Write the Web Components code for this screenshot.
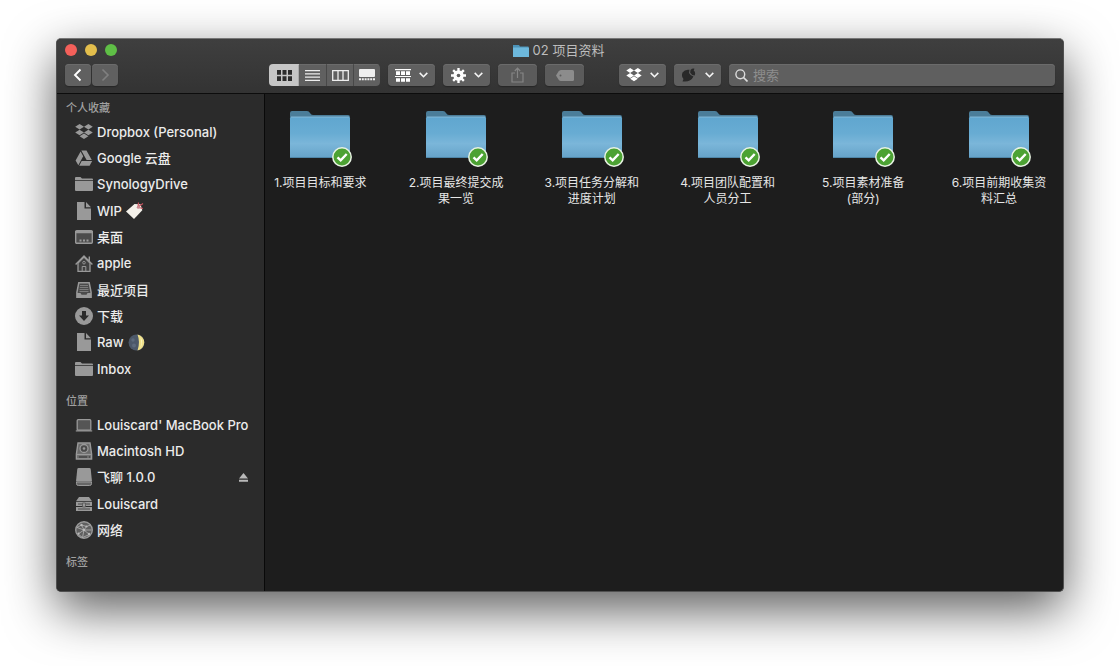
<!DOCTYPE html>
<html lang="zh-CN">
<head>
<meta charset="utf-8">
<title>02 项目资料</title>
<style>
  html { background: #fff; }
  body {
    margin: 0; box-sizing: border-box; min-height: 100vh; display: flex;
    padding: 38px 56px 74px;
    font-family: Inter, "Noto Sans CJK SC", sans-serif; color: #ececec;
  }
  finder-window { flex: 1; }
</style>
</head>
<body>
<finder-window>
  <title-bar slot="bar"><mac-icon name="mini"></mac-icon><span>02 项目资料</span></title-bar>

  <sidebar-section slot="side" label="个人收藏">
    <sidebar-item icon="dropbox">Dropbox (Personal)</sidebar-item>
    <sidebar-item icon="drive">Google 云盘</sidebar-item>
    <sidebar-item icon="folder">SynologyDrive</sidebar-item>
    <sidebar-item icon="doc">WIP <mac-icon name="tagemoji"></mac-icon></sidebar-item>
    <sidebar-item icon="desktop">桌面</sidebar-item>
    <sidebar-item icon="home">apple</sidebar-item>
    <sidebar-item icon="recent">最近项目</sidebar-item>
    <sidebar-item icon="download">下载</sidebar-item>
    <sidebar-item icon="doc">Raw <mac-icon name="moon"></mac-icon></sidebar-item>
    <sidebar-item icon="folder">Inbox</sidebar-item>
  </sidebar-section>
  <sidebar-section slot="side" label="位置">
    <sidebar-item icon="laptop">Louiscard' MacBook Pro</sidebar-item>
    <sidebar-item icon="hdd">Macintosh HD</sidebar-item>
    <sidebar-item icon="disk" ejectable>飞聊 1.0.0</sidebar-item>
    <sidebar-item icon="nas">Louiscard</sidebar-item>
    <sidebar-item icon="network">网络</sidebar-item>
  </sidebar-section>
  <sidebar-section slot="side" label="标签"></sidebar-section>

  <folder-tile>1.项目目标和要求</folder-tile>
  <folder-tile>2.项目最终提交成<br>果一览</folder-tile>
  <folder-tile>3.项目任务分解和<br>进度计划</folder-tile>
  <folder-tile>4.项目团队配置和<br>人员分工</folder-tile>
  <folder-tile>5.项目素材准备<br>(部分)</folder-tile>
  <folder-tile>6.项目前期收集资<br>料汇总</folder-tile>
</finder-window>

<script>
const DROPBOX = (w, h) => `<svg width="${w}" height="${h}" viewBox="0 0 18 16"><path fill="currentColor" d="M4.6 0 9 2.8 4.6 5.6.2 2.8zM13.4 0l4.4 2.8-4.4 2.8L9 2.8zM4.6 5.7 9 8.5l-4.4 2.8L.2 8.5zM13.4 5.7l4.4 2.8-4.4 2.8L9 8.5zM9 9.5l4.4 2.8L9 15.1l-4.4-2.8z"/></svg>`;
const ICONS = {
  mini: `<svg width="16" height="13" viewBox="0 0 16 13"><path fill="#4c93b8" d="M0 1h6l1 1.5h8.500V12H0z"/><path fill="#6db8dc" d="M0 3.500h16V13H0z"/></svg>`,
  dropbox: DROPBOX(18, 16),
  dropboxSmall: DROPBOX(16, 14),
  drive: `<svg width="18" height="16" viewBox="0 0 18 16"><path fill="currentColor" d="M6.300.5h5.200l5.300 9.500h-5.200zM5.600 1.600 8.200 6.300 3.300 15.300.6 10.600zM6.700 11.100h10.500l-2.600 4.600H4.200z"/></svg>`,
  folder: `<svg width="18" height="14" viewBox="0 0 18 14"><path fill="currentColor" d="M0 1q0-1 1-1h4.500l1.500 1.600h10q1 0 1 1v.6H0zM0 4h18v9q0 1-1 1H1q-1 0-1-1z"/></svg>`,
  doc: `<svg width="14" height="18" viewBox="0 0 14 18"><path fill="currentColor" d="M0 0h7.500v6.500H14V18H0zM9 0l5 5.200H9z"/></svg>`,
  desktop: `<svg width="18" height="14" viewBox="0 0 18 14"><rect x=".7" y=".7" width="16.600" height="12.600" rx="1" fill="#4c4c4c" stroke="currentColor" stroke-width="1.400"/><path fill="currentColor" d="M0 1h18v2.200H0z"/><path stroke="currentColor" stroke-width="2" stroke-dasharray="2 1.500" d="M4.500 10.500h9"/></svg>`,
  home: `<svg width="18" height="17" viewBox="0 0 18 17"><path fill="#404040" stroke="currentColor" stroke-width="1.300" d="M3 8v8.300h12V8L9 2z"/><path fill="none" stroke="currentColor" stroke-width="1.400" d="M.6 9.500 9 1l8.400 8.500M14.300 1.500v5"/><circle cx="9" cy="7.700" r="1.300" fill="none" stroke="currentColor" stroke-width=".9"/><path fill="none" stroke="currentColor" d="M7.200 16v-4.500h3.600V16"/></svg>`,
  recent: `<svg width="16" height="17" viewBox="0 0 16 17"><path fill="#4b4b4b" stroke="currentColor" stroke-width="1.500" d="M2.800.8h10.400l1.900 9.500v5H.9v-5z"/><path fill="currentColor" d="M1 11h3.500l1 1.800h5l1-1.800H15v5H1z"/><path stroke="#7c7c7c" d="M4 3.500h8M3.800 5.500h8.400M3.500 7.500h9M3.500 9.500h9"/></svg>`,
  download: `<svg width="18" height="18" viewBox="0 0 18 18"><circle cx="9" cy="9" r="9" fill="currentColor"/><path fill="#2b2b2b" d="M7 4h4v4.500h3L9 14 4 8.500h3z"/></svg>`,
  laptop: `<svg width="18" height="13" viewBox="0 0 18 13"><rect x="2.200" y=".7" width="13.600" height="10.500" rx="1" fill="#555" stroke="currentColor" stroke-width="1.300"/><path fill="currentColor" d="M.8 11.300h16.400v1.200H.8z"/></svg>`,
  hdd: `<svg width="18" height="18" viewBox="0 0 18 18"><path fill="#6a6a6a" stroke="currentColor" stroke-width="1.400" d="M3 1h12l1.600 11v5H1.400v-5z"/><path fill="none" stroke="currentColor" stroke-width="1.300" d="M1.500 12.500h15"/><circle cx="9" cy="6.500" r="4" fill="#4a4a4a" stroke="currentColor" stroke-width="1.300"/><circle cx="9" cy="6.500" r="1.300" fill="currentColor"/><path stroke="#333" d="M4 15h8M14 15h1"/></svg>`,
  disk: `<svg width="18" height="18" viewBox="0 0 18 18"><path fill="currentColor" d="M3.500 0h11q1 0 1.200 1L17 13.500H1L2.300 1q.2-1 1.200-1z"/><path fill="#666" stroke="currentColor" d="M1.500 14h15v1.700q0 1.800-1.800 1.800H3.300q-1.800 0-1.800-1.800z"/></svg>`,
  nas: `<svg width="18" height="14" viewBox="0 0 18 14"><path fill="currentColor" d="M4 0h10l3 4.200H1zM1 5h16v4H1zM1 10h16v4H1z"/><path stroke="#4a4a4a" d="M3 7h4M11 7h4M3 12h12"/><path fill="currentColor" stroke="#4a4a4a" stroke-width=".7" d="M7.500 6h3v4h-3z"/></svg>`,
  network: `<svg width="18" height="18" viewBox="0 0 18 18"><circle cx="9" cy="9" r="8.300" fill="#606060" stroke="currentColor" stroke-width="1.400"/><path fill="none" stroke="#b4b4b4" stroke-width=".8" d="M2 6.500 6.500 4l5 1.500L15.500 4M6.500 4 9 9l2.500-3.500M9 9l-6 4M9 9l5.500 4.500M9 9l-1.500 7.500M2 6.500 9 9l7.500 0M3 13l4.500 3.500 7-3"/><g fill="#bbb"><circle cx="6.500" cy="4" r="1.200"/><circle cx="9" cy="9" r="1.300"/><circle cx="11.500" cy="5.500" r="1.100"/><circle cx="3.500" cy="12.500" r="1.100"/><circle cx="14" cy="13" r="1.200"/></g></svg>`,
  tagemoji: `<svg width="18" height="18" viewBox="0 0 18 18" role="img" aria-label="标签"><path fill="#f4f1ea" d="M0 9.500 8.500 2l6 .3 1.800 6L8 17z"/><path fill="none" stroke="#c5515d" stroke-width="1.200" d="m12 5 5-3.500M12.500 5.500l4.500 1M12 5l.5-4.500"/><circle cx="12.300" cy="5.200" r="1.500" fill="#c98a92"/></svg>`,
  moon: `<svg width="17" height="17" viewBox="0 0 17 17" role="img" aria-label="月亮"><circle cx="8.500" cy="8.500" r="8" fill="#4c5869"/><circle cx="5" cy="6" r="1.700" fill="#5d6a7c"/><circle cx="6" cy="11.500" r="2" fill="#5d6a7c"/><path fill="#efe08a" d="M9.500.6a8 8 0 0 1 0 15.800Q12.500 8.500 9.500.6z"/><path fill="#fff9c4" d="M12.500 3q3 5 0 11 1.500-5.500 0-11z"/></svg>`,
  eject: `<svg width="9" height="9" viewBox="0 0 9 9"><path fill="#b9b9b9" d="M4.500 0 9 5.400H0zM0 6.800h9v2H0z"/></svg>`,
  back: `<svg width="10" height="14" viewBox="0 0 10 14"><path fill="none" stroke="#fff" stroke-width="1.900" d="M7.500 1.500 2 7l5.500 5.500"/></svg>`,
  forward: `<svg width="10" height="14" viewBox="0 0 10 14"><path fill="none" stroke="#808080" stroke-width="1.600" d="M2.500 1.500 8 7l-5.500 5.500"/></svg>`,
  grid: `<svg width="15" height="11" viewBox="0 0 15 11"><path fill="#2c2c2c" d="M0 0h4v4.700H0zM5.500 0h4v4.700h-4zM11 0h4v4.700h-4zM0 6.300h4V11H0zM5.500 6.300h4V11h-4zM11 6.300h4V11h-4z"/></svg>`,
  list: `<svg width="15" height="11" viewBox="0 0 15 11"><path stroke="#eee" stroke-width="1.300" d="M0 .7h15M0 3.900h15M0 7.100h15M0 10.300h15"/></svg>`,
  columns: `<svg width="17" height="11" viewBox="0 0 17 11"><path fill="none" stroke="#eee" stroke-width="1.300" d="M.7.7h15.600v9.600H.7zM6 .7v9.600M11 .7v9.600"/></svg>`,
  gallery: `<svg width="16" height="12" viewBox="0 0 16 12"><rect width="16" height="8" rx="1" fill="#eee"/><path stroke="#eee" stroke-width="2" stroke-dasharray="2 .8" d="M0 10.300h16"/></svg>`,
  group: `<svg width="16" height="13" viewBox="0 0 16 13"><path fill="#fff" d="M0 0h16v1.200H0zM1 2.300h4v3.600H1zM6 2.300h4v3.600H6zM11 2.300h4v3.600h-4zM0 6.900h16v1.200H0zM1 9.200h4v3.600H1zM6 9.200h4v3.600H6zM11 9.200h4v3.600h-4z"/></svg>`,
  gear: `<svg width="15" height="15" viewBox="0 0 14 14"><path stroke="#fff" stroke-width="2.200" d="M7 0v14M0 7h14M2 2l10 10M12 2 2 12"/><circle cx="7" cy="7" r="4.800" fill="#fff"/><circle cx="7" cy="7" r="1.700" fill="#606060"/></svg>`,
  share: `<svg width="13" height="16" viewBox="0 0 13 16"><path fill="none" stroke="#858585" stroke-width="1.200" d="M4 6H1v9h11V6H9M6.500 11V1.500M3.800 4l2.700-2.800L9.200 4"/></svg>`,
  label: `<svg width="18" height="11" viewBox="0 0 18 11"><path fill="#8c8c8c" d="M5 0h11.500Q18 0 18 1.500v8q0 1.500-1.500 1.500H5Q3.500 11 2.500 9.500L0 5.500l2.500-4Q3.500 0 5 0z"/><circle cx="4.500" cy="5.500" r="1" fill="#5c5c5c"/></svg>`,
  acorn: `<svg width="16" height="14" viewBox="0 0 16 14"><path fill="#292929" d="M1.500 4.500Q4 1 8.500 1.800L8 5q1.500 3 4.500 3.500Q10 13.500 4 13.500H1.500l1-2.500Q0 8 1.500 4.500z"/><path fill="#292929" d="M9.500 2Q11.500 0 13.500.8l-.8 1.700q2.300 2 1 5Q10.500 7.500 9.200 4.800z"/></svg>`,
  caret: `<svg width="9" height="6" viewBox="0 0 9 6"><path fill="none" stroke="#f4f4f4" stroke-width="1.600" d="M.7.9 4.500 4.700 8.300.9"/></svg>`,
  search: `<svg width="13" height="13" viewBox="0 0 13 13"><circle cx="5.300" cy="5.300" r="4.400" fill="none" stroke="#dcdcdc" stroke-width="1.400"/><path stroke="#dcdcdc" stroke-width="1.700" d="m8.500 8.500 4 4"/></svg>`,
  bigfolder: `<svg width="62" height="50" viewBox="0 0 62 50"><defs><linearGradient id="f" x2="0" y2="1"><stop offset="0" stop-color="#60a6cf"/><stop offset=".4" stop-color="#68acd3"/><stop offset=".65" stop-color="#7bb6d9"/><stop offset="1" stop-color="#65a2c8"/></linearGradient></defs><path fill="#4b7d99" d="M1 3q0-2 2-2h15q2 0 3 2 1 2 3 2h35q2 0 2 2v4H1z"/><path fill="url(#f)" d="M1 8.500Q1 7 2.500 7h57Q61 7 61 8.500V47q0 1-1 1H2q-1 0-1-1z"/><path stroke="#8fc3df" stroke-width=".8" d="M2 7h58"/><path stroke="#4f86a8" d="M1 47.500h60"/></svg>`,
  check: `<svg width="20" height="20" viewBox="0 0 20 20"><circle cx="10" cy="10" r="9.200" fill="#4ca233" stroke="#e9f3e4" stroke-width="1.500"/><path fill="none" stroke="#fff" stroke-width="2.400" d="m5.500 10.300 3.200 3 6-6.300"/></svg>`
};
const define = (name, render) => customElements.define(name, class extends HTMLElement {
  connectedCallback() {
    if (this.shadowRoot) return;
    this.attachShadow({ mode: 'open' }).innerHTML = render(this);
  }
});

define('mac-icon', el => `<style>:host{display:inline-flex;flex:none}svg{display:block}</style>${ICONS[el.getAttribute('name')]}`);

define('tool-button', el => `<style>
  :host{display:flex;flex:none;width:47px}
  button{all:unset;box-sizing:border-box;flex:1;height:22px;display:flex;align-items:center;justify-content:center;gap:8px;
    background:#606060;border-radius:var(--radius,4px);box-shadow:inset 0 1px #6b6b6b,0 1px 1px #262626}
  :host([narrow]) button{background:#5b5b5b}
  :host([pressed]) button{background:#c6c6c6;box-shadow:none}
  :host([narrow]){width:39px}
  :host([nav]){width:26px}
  :host([seg]){width:27px}
  :host([seg][pressed]){width:30px}
</style><button type="button" aria-label="${el.getAttribute('label')}" ${el.hasAttribute('menu') ? 'aria-haspopup="menu"' : ''}>
  <mac-icon name="${el.getAttribute('icon')}"></mac-icon>${el.hasAttribute('menu') ? '<mac-icon name="caret"></mac-icon>' : ''}</button>`);

define('search-field', () => `<style>
  :host{display:block;flex:1;min-width:0}
  label{display:flex;align-items:center;gap:5px;height:22px;padding:0 6px;background:#5f5f5f;border-radius:4px;box-shadow:inset 0 1px #6b6b6b,0 1px 1px #262626}
  input{all:unset;flex:1;min-width:0;font-size:13px;line-height:22px;color:#eee}
  input::placeholder{color:#8e8e8e;opacity:1}
</style><label><mac-icon name="search"></mac-icon><input type="text" placeholder="搜索" aria-label="搜索"></label>`);

define('title-bar', () => `<style>
  :host{display:block;padding:0 8px 7px;background:linear-gradient(#3f3f3f,#333);border-bottom:1px solid #0c0c0c}
  .top{display:grid;grid-template-columns:1fr auto 1fr;align-items:center;height:22px;margin-bottom:3px}
  .lights{display:flex;gap:8px}
  .lights button{all:unset;width:12px;height:12px;border-radius:50%}
  .title{display:flex;align-items:center;gap:4px;padding-right:3px;font-size:13px;line-height:20px;color:#bdbdbd;white-space:nowrap}
  .tools{display:flex;gap:8px}
  .nav,.views{display:flex;gap:1px}
  .views{gap:0;border-radius:4px;overflow:hidden;--radius:0}
  .views tool-button+tool-button{border-left:1px solid #505050;box-sizing:border-box}
  .views tool-button:nth-child(2){border-left:0}
  .gap{flex:0 1 135px}
  .gap.small{flex-basis:19px}
</style>
<div class="top">
  <div class="lights"><button aria-label="关闭" style="background:#f4605a"></button><button aria-label="最小化" style="background:#e3be4c"></button><button aria-label="缩放" style="background:#5fbf46"></button></div>
  <div class="title"><slot></slot></div>
</div>
<div class="tools">
  <div class="nav"><tool-button nav icon="back" label="后退"></tool-button><tool-button nav icon="forward" label="前进"></tool-button></div>
  <div class="gap"></div>
  <div class="views"><tool-button seg pressed icon="grid" label="图标"></tool-button><tool-button seg icon="list" label="列表"></tool-button><tool-button seg icon="columns" label="分栏"></tool-button><tool-button seg icon="gallery" label="画廊"></tool-button></div>
  <tool-button menu icon="group" label="分组"></tool-button>
  <tool-button menu icon="gear" label="操作"></tool-button>
  <tool-button narrow icon="share" label="共享"></tool-button>
  <tool-button narrow icon="label" label="标签"></tool-button>
  <div class="gap small"></div>
  <tool-button menu icon="dropboxSmall" label="Dropbox" style="color:#fff"></tool-button>
  <tool-button menu icon="acorn" label="插件"></tool-button>
  <search-field></search-field>
</div>`);

define('sidebar-section', el => `<style>
  :host{display:block}
  h2{margin:0 0 4px;padding-left:9px;font-size:11px;line-height:14px;font-weight:500;color:#a0a0a0}
  ::slotted(:nth-child(3n)){margin-bottom:1px}
</style><h2>${el.getAttribute('label')}</h2><slot></slot>`);

define('sidebar-item', el => `<style>
  :host{display:flex;align-items:center;height:26px;padding:0 16px 0 18px}
  a{flex:1;display:flex;align-items:center;gap:4px;color:#ececec;text-decoration:none;font-size:13px;line-height:26px;font-weight:500;white-space:nowrap}
  .icon{display:flex;justify-content:center;width:18px;color:#999}
  button{all:unset;display:flex}
</style><a href="#"><span class="icon"><mac-icon name="${el.getAttribute('icon')}"></mac-icon></span><slot></slot></a>
${el.hasAttribute('ejectable') ? '<button type="button" aria-label="推出"><mac-icon name="eject"></mac-icon></button>' : ''}`);

define('folder-tile', () => `<style>
  :host{display:flex;flex-direction:column;align-items:center;width:104px;font-size:12px;line-height:16px;text-align:center;color:#e6e6e6}
  .art{position:relative;height:65px}
  .badge{position:absolute;right:-1px;top:37px}
</style><div class="art"><mac-icon name="bigfolder"></mac-icon><mac-icon class="badge" name="check"></mac-icon></div><div><slot></slot></div>`);

define('finder-window', () => `<style>
  :host{display:flex;flex-direction:column;box-sizing:border-box;min-width:0;border:1px solid #505050;border-top-color:#777;border-radius:5px;overflow:hidden;background:#1d1d1d;
    box-shadow:0 18px 50px rgba(0,0,0,.64)}
  .body{flex:1;display:flex}
  aside{flex:0 0 208px;box-sizing:border-box;display:flex;flex-direction:column;gap:12px;padding:7px 0 8px;background:#2b2b2b;border-right:1px solid #090909}
  main{flex:1;display:flex;align-items:flex-start;justify-content:space-between;padding:16px 12px 16px 3px}
</style><slot name="bar"></slot><div class="body"><aside><slot name="side"></slot></aside><main><slot></slot></main></div>`);
</script>
</body>
</html>
